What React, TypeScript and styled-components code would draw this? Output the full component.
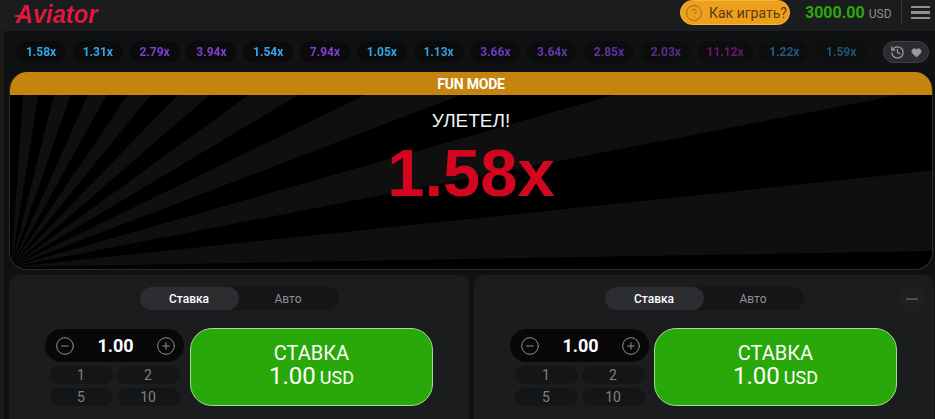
import styled, { createGlobalStyle } from "styled-components";
import { CircleHelp, CircleMinus, CirclePlus, Heart, History } from "lucide-react";

const GlobalStyle = createGlobalStyle`
    html, body { margin:0; padding:0; background:#1f1c18; }
    body { font-family:Roboto, "Liberation Sans", sans-serif; overflow:hidden; }
    * { box-sizing:border-box; }
`

const Page = styled.div`
    width:935px; height:419px;
    padding-left:4px;
    overflow:hidden;
`

const Main = styled.div`
    height:100%;
    background:#101112;
    display:flex; flex-direction:column;
`

const Header = styled.header`
    height:31px; flex:none;
    padding:0 0 3px 12px;
    background:#1b1c1d;
    display:flex; align-items:center;
`

const Logo = styled.div`
    position:relative;
    align-self:flex-start;
    width:88px; height:29px;
    font-family:"Liberation Sans", Arial, sans-serif;
    font-size:25.5px; line-height:29px; font-weight:700; font-style:italic;
    color:#e3173e;
    transform:scaleX(.93);
    transform-origin:left center;
    white-space:nowrap;

    &::before {
        content:'';
        position:absolute; left:-1px; top:15px;
        width:11px; height:2px;
        background:#e3173e;
    }
`

const HeaderRight = styled.div`
    margin:-3px 0 0 auto;
    height:24px;
    display:flex; align-items:center;
`

const HowTo = styled.div`
    width:110px; height:25px;
    padding-left:4px;
    border:1px solid #f6b440;
    border-radius:13px;
    background:#eda01c;
    color:#5d3a12;
    font-size:14px;
    display:flex; align-items:center; gap:6px;
    white-space:nowrap;

    svg { color:#9a6a1c; flex:none; }
`

const Balance = styled.div`
    margin-left:15px;
    width:96px;
    display:flex; align-items:baseline; gap:4px;
`

const BalanceValue = styled.span`
    color:#2aa90c;
    font-size:16px; font-weight:700;
`

const BalanceCurrency = styled.span`
    color:#8d8e90;
    font-size:12px;
`

const MenuWrap = styled.div`
    width:34px; height:100%;
    border-left:1px solid #3a3b3d;
    padding-left:9px;
    display:flex; flex-direction:column; justify-content:center; gap:3px;
`

const MenuLine = styled.i`
    display:block;
    width:19px; height:2.4px;
    background:#8f9092;
`

const CoefRow = styled.div`
    height:41px; flex:none;
    padding:10px 6px 9px 12px;
    display:flex; align-items:center;
`

const CoefList = styled.div`
    flex:1;
    display:flex; align-items:center; gap:6.8px;
    mask-image:linear-gradient(to right, #000 45%, rgba(0,0,0,.45) 92%);
`

const Coef = styled.div<{ $color: string; $wide?: boolean }>`
    width:${p => p.$wide ? 55 : 50}px; height:22px;
    flex:none;
    border-radius:11px;
    background:#0b0b0c;
    color:${p => p.$color};
    font-size:12px; font-weight:700;
    display:flex; align-items:center; justify-content:center;
`

const HistoryButton = styled.div`
    width:46px; height:22px;
    flex:none;
    margin-left:-5px;
    border:1px solid #3f4043;
    border-radius:11px;
    background:#2b2c2f;
    color:#9a9b9d;
    display:flex; align-items:center; justify-content:center; gap:6px;
`

const Stage = styled.section`
    height:198px; flex:none;
    margin:0 2px 0 5px;
    border:1px solid #2a2b2d;
    border-top:0;
    border-radius:18px;
    background:#000;
    overflow:hidden;
    display:flex; flex-direction:column;
`

const Banner = styled.div`
    height:23px; flex:none;
    background:#c4840e;
    color:#fff;
    font-size:14px; font-weight:700;
    letter-spacing:-.2px;
    display:flex; align-items:center; justify-content:center;
`

const StageBody = styled.div`
    position:relative;
    flex:1;
    display:flex; flex-direction:column; align-items:center;
    padding-top:14px;
`

const Rays = styled.svg`
    position:absolute; left:0; top:0;
    width:100%; height:100%;
`

const FlewAway = styled.div`
    position:relative;
    color:#f2f2f2;
    font-family:"Liberation Sans", Arial, sans-serif;
    font-size:19px; line-height:24px;
`

const Multiplier = styled.div`
    position:relative;
    margin-top:6px;
    color:#d2061f;
    font-family:"Liberation Sans", Arial, sans-serif;
    font-size:67px; line-height:68px; font-weight:700;
`

const Panels = styled.div`
    margin:5px 1px 0 5px;
    flex:1;
    display:flex; gap:5px;
`

const Panel = styled.div`
    position:relative;
    flex:1;
    border-radius:10px 10px 0 0;
    background:#1b1c1d;
    padding-top:12px;
    display:flex; flex-direction:column; align-items:center;
`

const Tabs = styled.div`
    width:199px; height:23px;
    border-radius:12px;
    background:#141516;
    display:flex;
`

const Tab = styled.div<{ $active?: boolean }>`
    width:99px;
    border-radius:12px;
    background:${p => p.$active ? '#2c2d30' : 'transparent'};
    color:${p => p.$active ? '#fff' : '#8f9092'};
    font-size:12px; font-weight:${p => p.$active ? 500 : 400};
    display:flex; align-items:center; justify-content:center;
`

const Collapse = styled.div`
    position:absolute; right:9px; top:11px;
    width:26px; height:26px;
    border-radius:50%;
    background:#1e1f21;
    display:flex; align-items:center; justify-content:center;

    &::after {
        content:'';
        width:12px; height:2px;
        background:#4c4d50;
    }
`

const BetRow = styled.div<{ $tight?: boolean }>`
    margin-top:18px;
    margin-right:${p => p.$tight ? 1 : 0}px;
    width:${p => p.$tight ? 387 : 388}px;
    display:flex; gap:${p => p.$tight ? 5 : 6}px;
`

const Controls = styled.div`
    width:139px; flex:none;
    padding-top:1px;
    display:flex; flex-direction:column; align-items:center; gap:4px;
`

const Stepper = styled.div`
    width:100%; height:33px;
    padding:0 8px 0 10px;
    border-radius:17px;
    background:#08080a;
    color:#8d8e90;
    display:flex; align-items:center; justify-content:space-between;
`

const Amount = styled.span`
    color:#fff;
    font-size:18px; font-weight:700;
`

const Chips = styled.div`
    width:130px;
    display:grid; grid-template-columns:1fr 1fr; gap:4px;
`

const Chip = styled.div`
    height:18px;
    border-radius:9px;
    background:#141516;
    color:#7f8082;
    font-size:14px;
    display:flex; align-items:center; justify-content:center;
`

const BetButton = styled.div`
    width:243px; height:78px;
    padding-bottom:2px;
    border:1px solid #9ede8c;
    border-radius:22px;
    background:#28a909;
    color:#fff;
    display:flex; flex-direction:column; align-items:center; justify-content:center;
`

const BetLabel = styled.div`
    font-size:20px; line-height:22px;
`

const BetValue = styled.div`
    font-size:24px; line-height:24px;
    display:flex; align-items:baseline; gap:4px;
`

const BetCurrency = styled.span`
    font-size:18px;
`

const BLUE = '#34a6ea';
const PURPLE = '#7d3fd6';
const PINK = '#b21cb0';

const coefs: { value: string; color: string }[] = [
    { value: '1.58x', color: BLUE },
    { value: '1.31x', color: BLUE },
    { value: '2.79x', color: PURPLE },
    { value: '3.94x', color: PURPLE },
    { value: '1.54x', color: BLUE },
    { value: '7.94x', color: PURPLE },
    { value: '1.05x', color: BLUE },
    { value: '1.13x', color: BLUE },
    { value: '3.66x', color: PURPLE },
    { value: '3.64x', color: PURPLE },
    { value: '2.85x', color: PURPLE },
    { value: '2.03x', color: PURPLE },
    { value: '11.12x', color: PINK },
    { value: '1.22x', color: BLUE },
    { value: '1.59x', color: BLUE },
];

// origin sits in the bottom left corner of the stage, bright ray every 10deg
const rayPoints = (from: number, to: number) => {
    const [ox, oy, r] = [1, 173, 1400];
    const point = (deg: number) => {
        const a = deg * Math.PI / 180;
        return `${ox + Math.cos(a) * r},${oy - Math.sin(a) * r}`;
    };
    return `${ox},${oy} ${point(from)} ${point(to)}`;
};

const rays = Array.from({ length: 9 }, (_, i) => rayPoints(1 + i * 10, 6 + i * 10));

const BetPanel = ({ removable }: { removable?: boolean }) => (
    <Panel>
        <Tabs>
            <Tab $active>Ставка</Tab>
            <Tab>Авто</Tab>
        </Tabs>
        {removable ? <Collapse /> : null}
        <BetRow $tight={removable}>
            <Controls>
                <Stepper>
                    <CircleMinus size={20} strokeWidth={1.2} />
                    <Amount>1.00</Amount>
                    <CirclePlus size={20} strokeWidth={1.2} />
                </Stepper>
                <Chips>
                    <Chip>1</Chip>
                    <Chip>2</Chip>
                    <Chip>5</Chip>
                    <Chip>10</Chip>
                </Chips>
            </Controls>
            <BetButton>
                <BetLabel>СТАВКА</BetLabel>
                <BetValue>1.00 <BetCurrency>USD</BetCurrency></BetValue>
            </BetButton>
        </BetRow>
    </Panel>
);

const App = () => {
    return (
        <Page>
            <GlobalStyle />
            <Main>
                <Header>
                    <Logo>Aviator</Logo>
                    <HeaderRight>
                        <HowTo>
                            <CircleHelp size={18} strokeWidth={1.3} />
                            Как играть?
                        </HowTo>
                        <Balance>
                            <BalanceValue>3000.00</BalanceValue>
                            <BalanceCurrency>USD</BalanceCurrency>
                        </Balance>
                        <MenuWrap>
                            <MenuLine />
                            <MenuLine />
                            <MenuLine />
                        </MenuWrap>
                    </HeaderRight>
                </Header>
                <CoefRow>
                    <CoefList>
                        {coefs.map((c, i) => (
                            <Coef key={i} $color={c.color} $wide={c.value.length > 5}>{c.value}</Coef>
                        ))}
                    </CoefList>
                    <HistoryButton>
                        <History size={15} strokeWidth={2} />
                        <Heart size={11} fill="currentColor" />
                    </HistoryButton>
                </CoefRow>
                <Stage>
                    <Banner>FUN MODE</Banner>
                    <StageBody>
                        <Rays viewBox="0 0 924 175" preserveAspectRatio="none">
                            {rays.map((points, i) => <polygon key={i} points={points} fill="#0f0f10" />)}
                        </Rays>
                        <FlewAway>УЛЕТЕЛ!</FlewAway>
                        <Multiplier>1.58x</Multiplier>
                    </StageBody>
                </Stage>
                <Panels>
                    <BetPanel />
                    <BetPanel removable />
                </Panels>
            </Main>
        </Page>
    );
};

export default App;
